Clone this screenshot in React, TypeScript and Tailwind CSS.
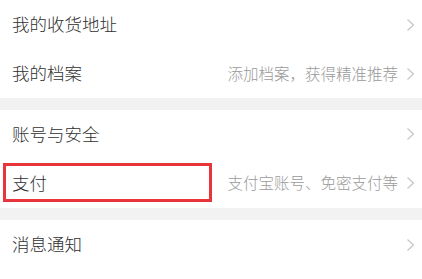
import React from 'react';

const Chevron = () => (
  <svg width="9" height="14" viewBox="0 0 9 14" className="shrink-0">
    <path d="M1.5 1.5 L7.5 7 L1.5 12.5" fill="none" stroke="#c6c6c6" strokeWidth="1.2" />
  </svg>
);

type RowProps = { title: string; hint?: string; marked?: boolean; h?: string };

const Row = ({ title, hint, marked, h = 'h-[49px]' }: RowProps) => (
  <div className={`relative flex items-center bg-white pl-3 pr-[7px] ${h}`}>
    <span className="text-[17.5px] font-light text-[#303030]">{title}</span>
    <div className="ml-auto flex items-center gap-[8px]">
      {hint && <span className="text-[15.5px] font-light text-[#9a9a9a]">{hint}</span>}
      <Chevron />
    </div>
    {marked && (
      <div className="absolute left-[3px] top-[5px] h-[39px] w-[209px] border-[3px] border-[#e8353b]" />
    )}
  </div>
);

export default function App() {
  return (
    <div
      className="w-[422px] h-[279px] overflow-hidden bg-white"
      style={{ fontFamily: '"Noto Sans CJK SC", "Noto Sans", sans-serif' }}
    >
      <Row title="我的收货地址" />
      <Row title="我的档案" hint="添加档案，获得精准推荐" />
      <div className="h-[12px] bg-[#f2f2f2]" />
      <Row title="账号与安全" h="h-[48px]" />
      <Row title="支付" hint="支付宝账号、免密支付等" h="h-[50px]" marked />
      <div className="h-[12px] bg-[#f2f2f2]" />
      <Row title="消息通知" />
    </div>
  );
}
